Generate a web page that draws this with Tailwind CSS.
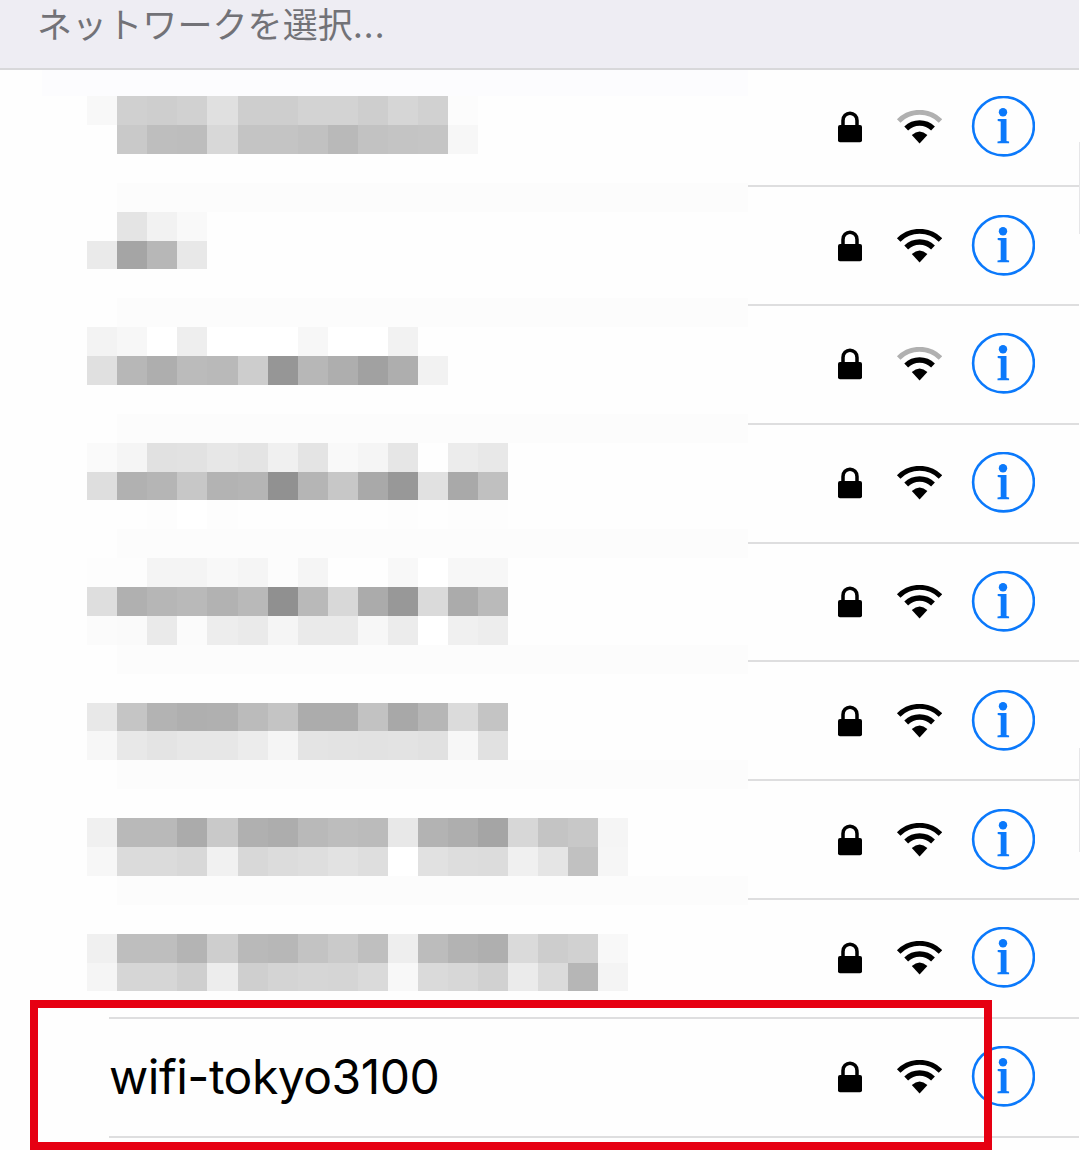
<!DOCTYPE html>
<html lang="ja">
<head>
<meta charset="utf-8">
<title>Wi-Fi</title>
<script src="https://cdn.jsdelivr.net/npm/@tailwindcss/browser@4"></script>
</head>
<body class="bg-[#fefefe]">
<svg class="hidden">
  <symbol id="lock" viewBox="0 0 24 32">
    <rect x="0" y="14" width="24" height="17.3" rx="2" fill="#000"/>
    <path d="M5 15V9.4a7 7.2 0 0 1 14 0V15" fill="none" stroke="#000" stroke-width="3.5"/>
  </symbol>
  <symbol id="wifi" viewBox="-0.6 0.9 46 34">
    <path d="M2.1 11.9a29.6 29.6 0 0 1 41.8 0" fill="none" stroke="currentColor" stroke-width="5"/>
    <path d="M9.6 19.4a19 19 0 0 1 26.8 0" fill="none" stroke="#000" stroke-width="5.4"/>
    <path d="M15.2 26q7.8-7 15.6 0L23 34.3z" fill="#000"/>
  </symbol>
  <symbol id="info" viewBox="-0.5 0.8 64 62">
    <ellipse cx="32" cy="31" rx="30.4" ry="29.2" fill="none" stroke="#0b79fb" stroke-width="2.6"/>
    <circle cx="31.5" cy="17" r="4.2" fill="#0b79fb"/>
    <path d="M26.2 23.9h8.8v21.8l2.6.5v1.9H26v-1.9l3.2-.5V26.3l-3-.4z" fill="#0b79fb"/>
  </symbol>
</svg>
<main class="relative flex h-[1150px] w-[1080px] flex-col overflow-hidden">
  <header class="h-[70px] w-[1079px] shrink-0 border-b-2 border-[#d8d8da] bg-[#eeedf3] pl-[37px]">
    <h1 class="whitespace-nowrap font-['Noto_Sans_CJK_JP',sans-serif] text-[35px] font-normal leading-[45px] tracking-[0.1px] text-[#727277]">ネットワークを選択<span class="tracking-[1.2px]">...</span></h1>
  </header>
  <ul id="list" class="-mt-[1.5px] w-[1079px]"></ul>
  <svg id="mosaic" class="absolute left-0 top-0 h-[1000px] w-[750px]" viewBox="0 0 750 1000" shape-rendering="crispEdges"></svg>
  <div class="absolute left-[1079px] top-[142px] h-[92px] w-px bg-[#e6e6e8]"></div>
  <div class="absolute left-[1079px] top-[748px] h-[104px] w-px bg-[#e6e6e8]"></div>
  <div class="absolute left-[30px] top-[1000px] h-[150px] w-[962px] border-8 border-[#e60012]"></div>
</main>
<script>
const names = ['', '', '', '', '', '', '', '', 'wifi-tokyo3100'];
const weak = [0, 2];
document.getElementById('list').innerHTML = names.map((name, i) => `
  <li class="flex h-[118.8px] pl-[109px]">
    <div class="flex flex-1 items-center border-b-2 border-[#dededf] pr-[44px]">
      <span class="flex-1 whitespace-nowrap font-['Inter',sans-serif] text-[48px] leading-none tracking-[-0.5px] text-black">${name}</span>
      <svg class="mr-[34px] h-8 w-6"><use href="#lock"/></svg>
      <svg class="mr-[29px] h-[34px] w-[46px] ${weak.includes(i) ? 'text-[#b0b0b0]' : 'text-black'}"><use href="#wifi"/></svg>
      <svg class="h-[62px] w-16"><use href="#info"/></svg>
    </div>
  </li>`).join('');

// Pixelated names: row index -> gray level of each cell
const cells = {
  0: 'f8 d0 ce d1 e0 ce ce d3 d3 ce d6 d1 fc',
  1: 'fe c9 be bd d8 c4 c4 c1 b9 c2 c4 c5 f7',
  4: 'fe e4 f2 f9',
  5: 'ea a5 b7 e8',
  8: 'f3 f7 ff ee ff ff ff f7 ff ff f2',
  9: 'e0 b7 ae bb b9 cd 96 b7 ae a1 ae f2',
  12: 'fa f5 e1 e2 e7 e4 f0 e4 f9 f5 e6 fe ec e8',
  13: 'de b1 b5 c7 b3 b5 91 b5 c7 a9 98 e1 a9 c0',
  14: 'fe fe fd ff fd fe fe fe fe fe fd fe fd fd',
  16: 'fd fd f4 f4 f8 f5 fc f5 fe fe f8 ff f7 f7',
  17: 'de b0 b6 b9 b2 b9 90 b9 d8 ab 98 da ab ba',
  18: 'fb fa ea fb ed ea f5 ea ea f7 ec ff f0 ed',
  21: 'e8 c5 b3 af b0 bb c4 ac ac c2 a8 b6 db c4',
  22: 'f7 e8 e4 e7 e7 ec f5 e4 e3 e2 e3 e1 f7 e1',
  25: 'f0 b9 b9 ab c9 b0 ad b9 bd bb e8 b3 ae a5 d7 c4 c8 f5',
  26: 'f7 db db d8 f1 d8 dc de e2 de ff e1 dd dc f0 e5 c1 f6',
  29: 'f0 be be b4 ce b9 b7 c3 ca bf ee bc b3 af da cd d1 f8',
  30: 'f5 d6 d6 cf ed cf d4 d6 d5 da f8 da d7 d1 eb db b6 f4'
};
const X = c => Math.round(87.2 + c * 30.06), Y = r => Math.round(96.1 + r * 28.88);
const rect = (x0, y0, x1, y1, f) => `<rect x="${x0}" y="${y0}" width="${x1 - x0}" height="${y1 - y0}" fill="${f}"/>`;
let out = rect(41, 70, 748, 1000, '#fefefe') + rect(42, 70, 748, 96, '#fcfcfe');
for (const r of [3, 7, 11, 15, 19, 23, 27]) out += rect(X(1), Y(r), 748, Y(r + 1), '#fcfcfc');
for (const [r, row] of Object.entries(cells))
  row.split(' ').forEach((g, c) => out += rect(X(c), Y(+r), X(c + 1), Y(+r + 1), '#' + g.repeat(3)));
document.getElementById('mosaic').innerHTML = out;
</script>
</body>
</html>
